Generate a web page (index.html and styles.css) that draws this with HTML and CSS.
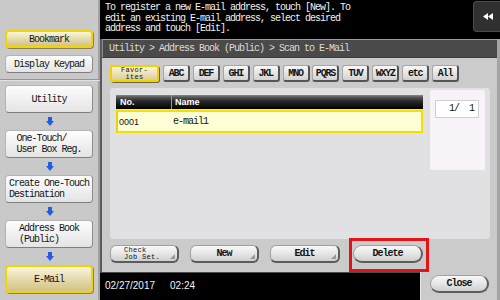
FILE: index.html
```html
<!DOCTYPE html>
<html>
<head>
<meta charset="utf-8">
<link rel="stylesheet" href="styles.css">
</head>
<body>
<div class="screen">
  <aside class="side">
    <div class="side-top">
      <div class="sbtn sel">Bookmark</div>
      <div class="sbtn">Display Keypad</div>
    </div>
    <div class="side-flow">
      <div class="sbtn tall"><span>Utility</span></div>
      <div class="arrow"><svg width="8" height="9" viewBox="0 0 8 9"><path d="M2 0H6V4H8L4 9L0 4H2Z" fill="#1f5ee0"/></svg></div>
      <div class="sbtn tall"><span>One-Touch/<br>User Box Reg.</span></div>
      <div class="arrow"><svg width="8" height="9" viewBox="0 0 8 9"><path d="M2 0H6V4H8L4 9L0 4H2Z" fill="#1f5ee0"/></svg></div>
      <div class="sbtn tall"><span>Create One-Touch<br>Destination</span></div>
      <div class="arrow"><svg width="8" height="9" viewBox="0 0 8 9"><path d="M2 0H6V4H8L4 9L0 4H2Z" fill="#1f5ee0"/></svg></div>
      <div class="sbtn tall"><span>Address Book<br>(Public)</span></div>
      <div class="arrow"><svg width="8" height="9" viewBox="0 0 8 9"><path d="M2 0H6V4H8L4 9L0 4H2Z" fill="#1f5ee0"/></svg></div>
      <div class="sbtn tall sel"><span>E-Mail</span></div>
    </div>
  </aside>
  <main class="main">
    <header class="msg">
      <p class="msg-text">To register a new E-mail address, touch [New]. To<br>edit an existing E-mail address, select desired<br>address and touch [Edit].</p>
      <div class="back"><svg width="10" height="7" viewBox="0 0 10 7"><path d="M5 0L0 3.5L5 7Z M10 0L5 3.5L10 7Z" fill="#fff"/></svg></div>
    </header>
    <section class="panel">
      <div class="crumb">Utility &gt; Address Book (Public) &gt; Scan to E-Mail</div>
      <div class="tabs">
        <div class="tab fav"><span class="tiny">Favor-<br>ites</span></div>
        <div class="tab-group">
          <div class="tab">ABC</div>
          <div class="tab">DEF</div>
          <div class="tab">GHI</div>
          <div class="tab">JKL</div>
          <div class="tab">MNO</div>
          <div class="tab">PQRS</div>
          <div class="tab">TUV</div>
          <div class="tab">WXYZ</div>
          <div class="tab">etc</div>
          <div class="tab">All</div>
        </div>
      </div>
      <div class="list">
        <div class="table">
          <div class="thead"><span class="c-no">No.</span><span class="c-name">Name</span></div>
          <div class="row"><span class="c-no num">0001</span><span class="c-name">e-mail1</span></div>
        </div>
        <div class="pager"><div class="page">1/&nbsp;&nbsp;1</div></div>
      </div>
      <div class="actions">
        <div class="abtn w69 corner"><span class="tiny left">Check<br>Job Set.</span></div>
        <div class="abtn w69 corner">New</div>
        <div class="abtn w70 corner">Edit</div>
        <div class="delete-wrap"><div class="abtn w70 pill">Delete</div></div>
      </div>
    </section>
    <footer class="foot">
      <div class="clock"><span>02/27/2017</span><span>02:24</span></div>
      <div class="close-area"><div class="abtn pill close">Close</div></div>
    </footer>
  </main>
</div>
</body>
</html>
```

FILE: styles.css
```css
* { box-sizing: border-box; margin: 0; padding: 0; }

body {
  width: 500px;
  height: 300px;
  overflow: hidden;
  background: #000;
  font-family: "Liberation Mono", "DejaVu Sans Mono", monospace;
  font-size: 10px;
  letter-spacing: -1px;
  color: #141414;
}

.screen {
  display: grid;
  grid-template-columns: 100px 400px;
  height: 300px;
}

/* ---------- sidebar ---------- */
.side {
  background: #c9c9c9;
  box-shadow: inset -2px 0 0 #a2a2a2;
  display: flex;
  flex-direction: column;
}

.side-top {
  height: 80px;
  padding-top: 30px;
  border-bottom: 1px solid #959595;
  box-shadow: 0 1px 0 #e2e2e2;
  display: flex;
  flex-direction: column;
  gap: 7px;
}

.side-flow {
  padding-top: 5px;
  display: flex;
  flex-direction: column;
}

.sbtn {
  margin-left: 5px;
  width: 88px;
  height: 18px;
  display: flex;
  align-items: center;
  justify-content: center;
  background: linear-gradient(#fdfdfd, #e4e4e4);
  border: 1px solid #b4b4b4;
  border-right-color: #8c8c8c;
  border-bottom-color: #7e7e7e;
  border-radius: 4px;
  line-height: 11px;
}

.sbtn.tall { height: 28px; }

.sbtn span { text-align: left; }

.sbtn.sel {
  background: linear-gradient(#fbf6dc, #ddd09c 70%, #d3c488);
  border: 2px solid #f2d400;
  box-shadow: 1px 1px 0 #8a7f50;
}

.arrow {
  height: 17px;
  display: flex;
  align-items: center;
  justify-content: center;
  padding-right: 1px;
}

/* ---------- main ---------- */
.main {
  display: flex;
  flex-direction: column;
  height: 300px;
}

.msg {
  height: 39px;
  background: #000;
  display: flex;
  justify-content: space-between;
  align-items: flex-start;
}

.msg-text {
  color: #f2f2f2;
  padding: 3px 0 0 5px;
  line-height: 10.5px;
}

.back {
  width: 27px;
  height: 31px;
  margin-top: 1px;
  background: #303030;
  border: 1px solid #4c4c4c;
  border-right: 0;
  border-radius: 4px 0 0 4px;
  display: flex;
  align-items: center;
  justify-content: center;
  padding-left: 2px;
}

.panel {
  height: 233px;
  background: #cbcbcb;
  border-left: 2px solid #5a5a5a;
  border-right: 3px solid #a4a4a4;
  display: flex;
  flex-direction: column;
}

.crumb {
  height: 19px;
  background: #4a4a4a;
  border-top: 1px solid #9c9c9c;
  border-left: 1px solid #8a8a8a;
  border-bottom: 1px solid #3a3a3a;
  color: #dcdcdc;
  line-height: 17px;
  padding-left: 6px;
}

/* tabs */
.tabs {
  margin-top: 7px;
  height: 17px;
  padding-left: 8px;
  display: flex;
  gap: 4px;
}

.tab-group {
  display: flex;
  gap: 2.9px;
}

.tab {
  width: 27px;
  height: 17px;
  display: flex;
  align-items: center;
  justify-content: center;
  background: linear-gradient(#f8f8f8, #d2d2d2);
  border: 1px solid #a6a6a6;
  border-right: 2px solid #555;
  border-bottom: 2px solid #555;
  border-radius: 3px;
  font-weight: bold;
  font-size: 10px;
  letter-spacing: -1.2px;
}

.tab.fav {
  width: 49px;
  background: linear-gradient(#fbf5d6, #dccd96);
  border: 2px solid #f0d200;
  box-shadow: 1px 1px 0 #6d6440;
  font-weight: normal;
}

.tiny {
  font-size: 7px;
  letter-spacing: 0.3px;
  line-height: 7px;
  text-align: center;
}

.tiny.left { text-align: left; }

/* list */
.list {
  margin: 6px 7px 0 8px;
  height: 151px;
  background: #e1e0e2;
  border-radius: 3px;
  display: flex;
  align-items: flex-start;
  padding: 2px 5px 0 6px;
  gap: 7px;
}

.table {
  width: 307px;
  margin-top: 5px;
  display: flex;
  flex-direction: column;
}

.thead {
  height: 14px;
  display: flex;
  background: linear-gradient(#8a8a8a 0, #5a5a5a 2px, #2a2a2a 6px, #000);
  color: #fff;
  font-family: "Liberation Sans", Arial, sans-serif;
  font-weight: bold;
  font-size: 9px;
  letter-spacing: 0;
  line-height: 14px;
}

.thead .c-no {
  width: 56px;
  padding-left: 4px;
  border-right: 1px solid #9a9a9a;
}

.thead .c-name { padding-left: 3px; }

.row {
  margin-top: 1px;
  height: 23px;
  display: flex;
  align-items: center;
  background: #ffffd6;
  border: 2px solid #f3e000;
  border-left-color: #e9d500;
}

.row .c-no {
  width: 55px;
  padding-left: 1px;
}

.num {
  font-family: "Liberation Sans", Arial, sans-serif;
  font-size: 9px;
  letter-spacing: 0;
}

.pager {
  width: 55px;
  height: 80px;
  background: #f8f3f8;
  border-radius: 2px;
  padding: 10px 0 0 5px;
}

.page {
  width: 44px;
  height: 18px;
  background: #fff;
  border: 1px solid #d0d0d0;
  text-align: right;
  padding-right: 4px;
  line-height: 16px;
}

/* action buttons */
.actions {
  margin-top: 6px;
  height: 18px;
  padding-left: 8px;
  display: flex;
  gap: 11px;
}

.abtn {
  position: relative;
  height: 18px;
  display: flex;
  align-items: center;
  justify-content: center;
  background: linear-gradient(#f8f8f8, #e6e6e6 50%, #cfcfcf);
  border: 1px solid #a0a0a0;
  border-right: 2px solid #5c5c5c;
  border-bottom: 2px solid #5c5c5c;
  border-radius: 6px;
  font-weight: bold;
}

.w69 { width: 69px; }
.w70 { width: 70px; }

.abtn .tiny { font-weight: normal; padding-right: 4px; }

.corner::after {
  content: "";
  position: absolute;
  right: 2px;
  bottom: 2px;
  border-style: solid;
  border-width: 0 0 5px 5px;
  border-color: transparent transparent #9a9a9a transparent;
}

.pill { border-radius: 9px; }

.delete-wrap {
  position: relative;
  margin-left: 2px;
}

.delete-wrap::after {
  content: "";
  position: absolute;
  top: -7px;
  left: -4px;
  right: -6px;
  bottom: -9px;
  border: 3px solid #e21414;
}

/* footer */
.foot {
  height: 28px;
  display: flex;
  background: #000;
}

.clock {
  flex: 1;
  display: flex;
  gap: 15px;
  padding: 7px 0 0 5px;
  color: #f4f4f4;
  font-family: "Liberation Sans", Arial, sans-serif;
  font-size: 10px;
  letter-spacing: 0;
  border-top: 1px solid #4a4a4a;
}

.close-area {
  width: 80px;
  background: #cbcbcb;
  border-left: 1px solid #e6e6e6;
  border-right: 3px solid #a4a4a4;
  padding: 3px 0 0 9px;
}

.close { width: 59px; }
```
